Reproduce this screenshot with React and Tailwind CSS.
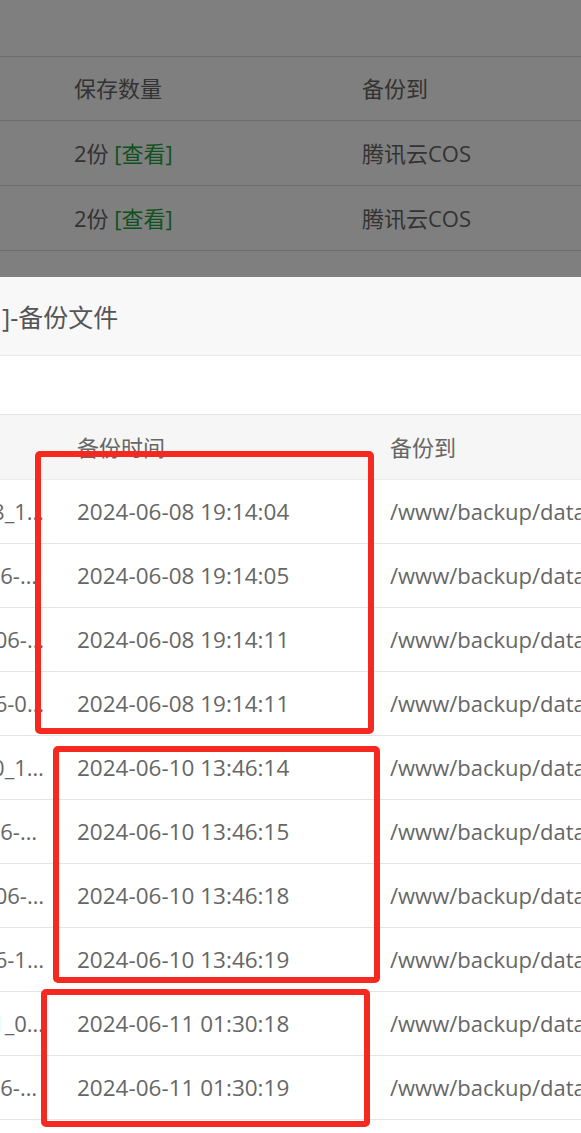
import React from "react";

const bgRows = [
  { count: "2份", dest: "腾讯云COS" },
  { count: "2份", dest: "腾讯云COS" },
];

const fileRows = [
  { name: "608_1…", pr: "pr-[13px]", time: "2024-06-08 19:14:04" },
  { name: "2024-06-…", pr: "pr-[20px]", time: "2024-06-08 19:14:05" },
  { name: "2024-06-…", pr: "pr-[13px]", time: "2024-06-08 19:14:11" },
  { name: "4-06-0…", pr: "pr-[13px]", time: "2024-06-08 19:14:11" },
  { name: "610_1…", pr: "pr-[13px]", time: "2024-06-10 13:46:14" },
  { name: "2024-06-…", pr: "pr-[20px]", time: "2024-06-10 13:46:15" },
  { name: "2024-06-…", pr: "pr-[13px]", time: "2024-06-10 13:46:18" },
  { name: "4-06-1…", pr: "pr-[13px]", time: "2024-06-10 13:46:19" },
  { name: "611_0…", pr: "pr-[13px]", time: "2024-06-11 01:30:18" },
  { name: "2024-06-…", pr: "pr-[20px]", time: "2024-06-11 01:30:19" },
];

export default function App() {
  return (
    <div
      className="relative h-[1133px] w-[581px] overflow-hidden bg-white text-[#666]"
      style={{ fontFamily: '"Open Sans", "Noto Sans CJK SC", sans-serif' }}
    >
      {/* underlying page */}
      <div className="h-[57px] border-b border-[#dcdcdc]" />
      <div className="flex h-[64px] items-center border-b border-[#dcdcdc] text-[22px]">
        <div className="w-[362px] pl-[74px]">保存数量</div>
        <div>备份到</div>
      </div>
      {bgRows.map((r, i) => (
        <div
          key={i}
          className="flex h-[65px] items-center border-b border-[#dcdcdc] text-[22px]"
        >
          <div className="w-[362px] pl-[74px]">
            {r.count} <span className="text-[#20a53a]">[查看]</span>
          </div>
          <div>{r.dest}</div>
        </div>
      ))}

      {/* shade */}
      <div className="absolute inset-0 bg-black/50" />

      {/* modal */}
      <div className="absolute inset-x-0 top-[277px] bottom-0 flex flex-col bg-white">
        <div className="flex h-[79px] items-center border-b border-[#e8e8e8] bg-[#f8f8f8] pt-[3px] text-[25px] text-[#555]">
          <span className="ml-[2px]">]-备份文件</span>
        </div>
        <div className="h-[58px]" />
        <div className="border-t border-[#e4e4e4]">
          <div className="flex h-[65px] items-center border-b border-[#ececec] bg-[#f6f6f6] text-[22px]">
            <div className="w-[57px]" />
            <div className="w-[313px] pl-[20px]">备份时间</div>
            <div className="pl-[20px]">备份到</div>
          </div>
          {fileRows.map((r, i) => (
            <div
              key={i}
              className="flex h-[64px] items-center border-b border-[#e4e4e4] text-[22px] text-[#666]"
            >
              <div className={`flex w-[57px] shrink-0 justify-end overflow-hidden whitespace-nowrap ${r.pr}`}>
                <span className="shrink-0">{r.name}</span>
              </div>
              <div className="w-[313px] shrink-0 whitespace-nowrap pl-[20px] text-[22.5px]">{r.time}</div>
              <div className="whitespace-nowrap pl-[20px]">/www/backup/database/</div>
            </div>
          ))}
        </div>
      </div>

      {/* annotation boxes */}
      <div className="absolute left-[35px] top-[451px] h-[283px] w-[339px] rounded-[5px] border-[6px] border-[#f5291f]" />
      <div className="absolute left-[53px] top-[746px] h-[237px] w-[327px] rounded-[5px] border-[6px] border-[#f5291f]" />
      <div className="absolute left-[41px] top-[989px] h-[138px] w-[329px] rounded-[5px] border-[6px] border-[#f5291f]" />
    </div>
  );
}
